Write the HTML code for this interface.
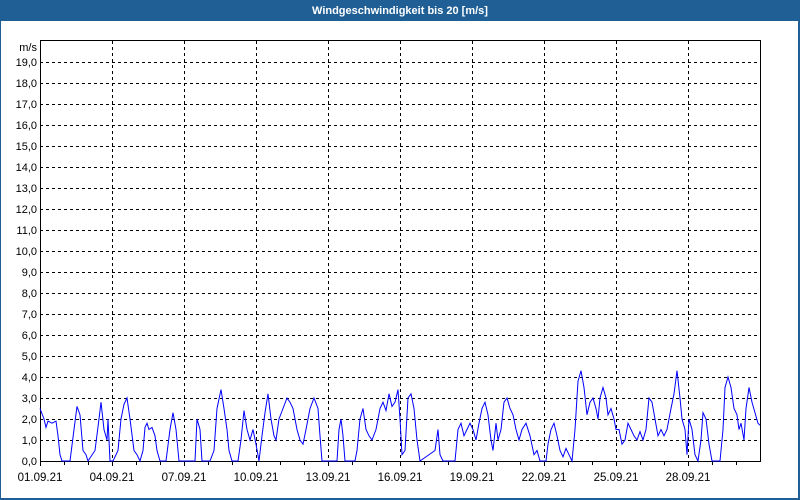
<!DOCTYPE html>
<html><head><meta charset="utf-8"><style>
html,body{margin:0;padding:0;width:800px;height:500px;overflow:hidden;background:#1f5f96;}
svg{display:block}
</style></head><body>
<svg width="800" height="500" xmlns="http://www.w3.org/2000/svg" font-family="Liberation Sans, sans-serif">
<rect x="0" y="0" width="800" height="500" fill="#1f5f96"/>
<rect x="1" y="21" width="797" height="477" fill="#fff"/>
<text x="400" y="14" fill="#fff" font-size="11" font-weight="bold" text-anchor="middle">Windgeschwindigkeit bis 20 [m/s]</text>
<g stroke="#000" stroke-width="1" stroke-dasharray="3,3" shape-rendering="crispEdges">
<path d="M40 440.5H760M40 419.5H760M40 398.5H760M40 377.5H760M40 356.5H760M40 335.5H760M40 314.5H760M40 293.5H760M40 272.5H760M40 251.5H760M40 230.5H760M40 209.5H760M40 188.5H760M40 167.5H760M40 146.5H760M40 125.5H760M40 104.5H760M40 83.5H760M40 62.5H760"/>
<path d="M112.5 41V461M184.5 41V461M256.5 41V461M328.5 41V461M400.5 41V461M472.5 41V461M544.5 41V461M616.5 41V461M688.5 41V461"/>
</g>
<g stroke="#000" stroke-width="1" fill="none" shape-rendering="crispEdges">
<rect x="40.5" y="40.5" width="720" height="421"/>
<path d="M40.5 461V466M64.5 461V465M88.5 461V465M112.5 461V466M136.5 461V465M160.5 461V465M184.5 461V466M208.5 461V465M232.5 461V465M256.5 461V466M280.5 461V465M304.5 461V465M328.5 461V466M352.5 461V465M376.5 461V465M400.5 461V466M424.5 461V465M448.5 461V465M472.5 461V466M496.5 461V465M520.5 461V465M544.5 461V466M568.5 461V465M592.5 461V465M616.5 461V466M640.5 461V465M664.5 461V465M688.5 461V466M712.5 461V465M736.5 461V465"/>
</g>
<g font-size="11" fill="#000" text-anchor="end">
<text x="37" y="51">m/s</text>
<text x="37" y="66">19,0</text><text x="37" y="87">18,0</text><text x="37" y="108">17,0</text><text x="37" y="129">16,0</text><text x="37" y="150">15,0</text><text x="37" y="171">14,0</text><text x="37" y="192">13,0</text><text x="37" y="213">12,0</text><text x="37" y="234">11,0</text><text x="37" y="255">10,0</text><text x="37" y="276">9,0</text><text x="37" y="297">8,0</text><text x="37" y="318">7,0</text><text x="37" y="339">6,0</text><text x="37" y="360">5,0</text><text x="37" y="381">4,0</text><text x="37" y="402">3,0</text><text x="37" y="423">2,0</text><text x="37" y="444">1,0</text><text x="37" y="465">0,0</text>
</g>
<g font-size="11.5" fill="#000" text-anchor="middle">
<text x="40" y="481">01.09.21</text><text x="112" y="481">04.09.21</text><text x="184" y="481">07.09.21</text><text x="256" y="481">10.09.21</text><text x="328" y="481">13.09.21</text><text x="400" y="481">16.09.21</text><text x="472" y="481">19.09.21</text><text x="544" y="481">22.09.21</text><text x="616" y="481">25.09.21</text><text x="688" y="481">28.09.21</text>
</g>
<polyline transform="translate(0,461) scale(1,-21)" vector-effect="non-scaling-stroke" fill="none" stroke="#0000ff" stroke-width="1"
points="40,2.5 44,2.0 46,1.6 48,1.9 52,1.8 56,1.9 58,1.2 60,0.3 62,0 70,0 74,1.5 77,2.6 80,2.2 83,0.5 86,0.3 88,0 95,0.5 99,2.0 101,2.8 104,1.5 107,1.0 108,2.0 110,0 113,0 118,0.5 121,2.0 124,2.7 127,3.0 130,2.0 134,0.5 137,0.3 140,0 143,0.5 145,1.6 147,1.8 149,1.5 152,1.6 155,1.2 157,0.5 160,0 166,0 170,1.5 173,2.3 176,1.5 179,0 195,0 197,2.0 200,1.5 202,0 210,0 214,0.5 217,2.5 221,3.4 224,2.5 227,1.5 229,0.5 232,0 238,0 241,1.0 244,2.4 247,1.5 250,1.0 253,1.5 256,0.8 259,0 262,1.2 265,2.3 268,3.2 271,2.0 274,1.2 276,1.0 279,2.0 283,2.5 287,3.0 290,2.8 293,2.5 297,1.5 300,1.0 303,0.8 306,1.5 310,2.5 314,3.0 318,2.5 320,1.2 322,0 337,0 339,1.5 341,2.0 343,1.2 345,0 355,0 357,0.5 360,2.0 363,2.5 366,1.5 369,1.2 372,1.0 376,1.5 380,2.5 383,2.8 386,2.4 389,3.2 392,2.6 395,2.8 398,3.4 400,2.0 402,0.3 405,0.5 408,3.0 411,3.2 414,2.5 417,1.0 420,0 435,0.5 438,1.5 440,0.3 443,0 455,0 458,1.5 461,1.8 464,1.2 467,1.5 470,1.8 473,1.5 476,1.0 479,1.8 482,2.5 485,2.8 488,2.2 491,1.0 493,0.5 496,1.8 498,1.0 501,1.5 504,2.8 507,3.0 510,2.5 513,2.2 516,1.5 519,1.0 522,1.5 526,1.8 530,1.2 534,0.3 537,0.5 540,0 546,0 548,0.8 551,1.5 554,1.8 557,1.2 560,0.5 563,0.2 566,0.6 569,0.3 572,0 575,1.5 578,3.8 581,4.3 584,3.5 587,2.2 590,2.8 593,3.0 596,2.5 598,2.0 600,3.0 603,3.5 606,3.0 608,2.2 611,2.5 614,2.0 616,1.5 619,1.5 622,0.8 625,1.0 628,1.8 631,1.5 634,1.2 637,1.0 640,1.4 643,1.0 646,1.5 649,3.0 652,2.8 655,2.0 658,1.2 661,1.5 664,1.2 667,1.5 671,2.5 674,3.2 677,4.3 680,3.0 682,2.0 685,1.5 687,0.3 689,2.0 692,1.5 695,0.3 698,0 701,1.0 703,2.3 706,2.0 709,0.8 712,0 720,0 723,1.5 725,3.5 728,4.0 731,3.5 734,2.5 737,2.2 739,1.5 741,1.8 744,1.0 746,2.5 749,3.5 752,2.8 755,2.3 758,1.8 760,1.7"/>
</svg>
</body></html>
